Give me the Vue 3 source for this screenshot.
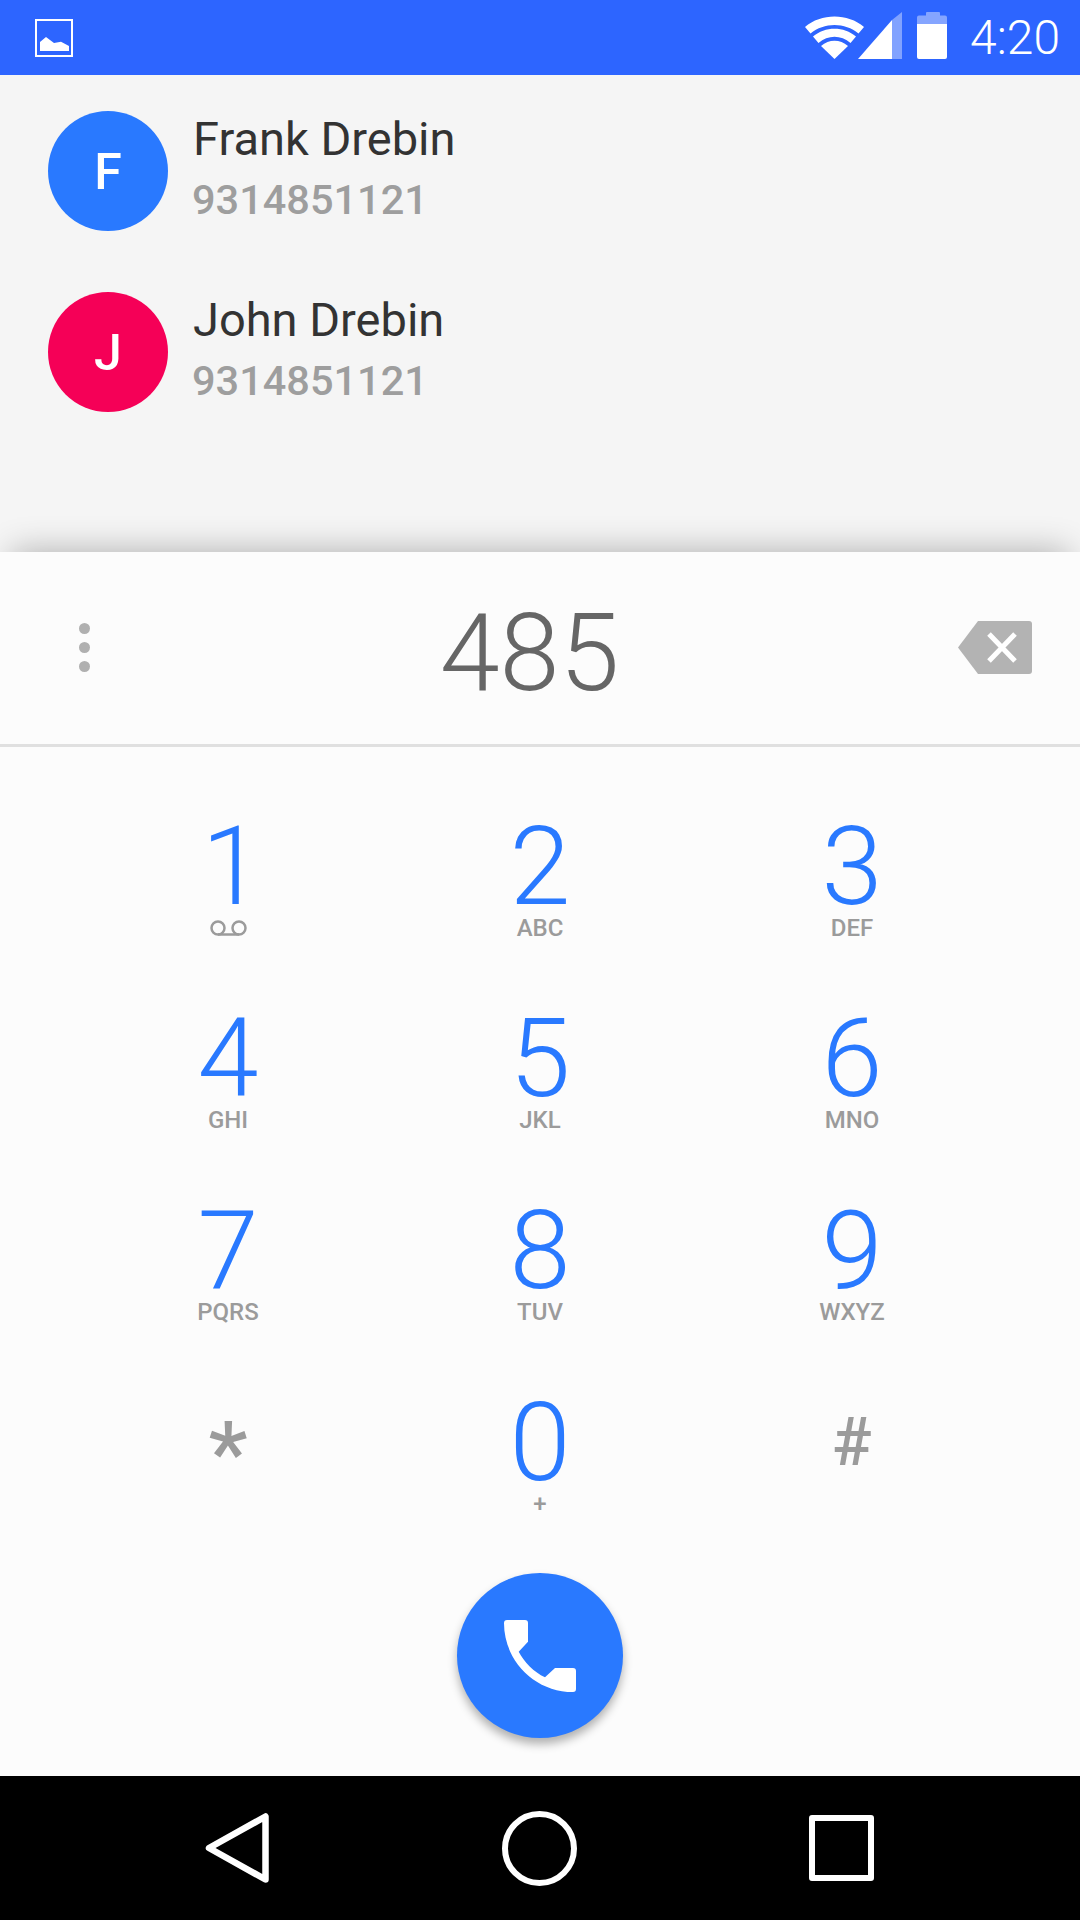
<script setup>
const contacts = [
  { initial: 'F', name: 'Frank Drebin', phone: '9314851121', tone: 'blue' },
  { initial: 'J', name: 'John Drebin', phone: '9314851121', tone: 'pink' }
]
const keys = [
  { d: '1', voicemail: true }, { d: '2', s: 'ABC' }, { d: '3', s: 'DEF' },
  { d: '4', s: 'GHI' }, { d: '5', s: 'JKL' }, { d: '6', s: 'MNO' },
  { d: '7', s: 'PQRS' }, { d: '8', s: 'TUV' }, { d: '9', s: 'WXYZ' },
  { d: '*', sym: 'star' }, { d: '0', s: '+' }, { d: '#', sym: 'hash' }
]
</script>

<template>
  <div class="phone">
    <header class="status">
      <svg class="pic" width="38" height="38" viewBox="0 0 38 38">
        <rect x="1" y="1" width="36" height="36" fill="none" stroke="#fff" stroke-width="2" />
        <path d="M5 23L11 18L15 21L19 24L26 22.700L34 27V32H5Z" fill="#fff" />
      </svg>
      <div class="status-right">
        <svg width="59" height="43" viewBox="0 0 59 43" class="wifi">
          <path d="M0 11C16-3 43-3 59 11L53.500 17.500C40 6 19 6 5.500 17.500Z" fill="#fff" />
          <path d="M8 20.500C20 10 39 10 51 20.500L45.500 27C36 18.500 23 18.500 13.500 27Z" fill="#fff" />
          <path d="M16 30C24 23 35 23 43 30L29.500 43Z" fill="#fff" />
        </svg>
        <svg width="44" height="47" viewBox="0 0 44 47" class="signal">
          <path d="M34 8L44 0V47H34Z" fill="#fff" fill-opacity=".4" />
          <path d="M0 47L34 8V47Z" fill="#fff" />
        </svg>
        <svg width="30" height="47" viewBox="0 0 30 47" class="battery">
          <path d="M2 3.500H9V1a1 1 0 0 1 1-1H22a1 1 0 0 1 1 1V3.500H28a2 2 0 0 1 2 2V12H0V5.500a2 2 0 0 1 2-2Z" fill="#fff" fill-opacity=".42" />
          <path d="M0 12H30V45a2 2 0 0 1-2 2H2a2 2 0 0 1-2-2Z" fill="#fff" />
        </svg>
        <span class="clock">4:20</span>
      </div>
    </header>

    <section class="contacts">
      <div v-for="c in contacts" :key="c.name" class="contact">
        <div class="avatar" :class="c.tone">{{ c.initial }}</div>
        <div class="info">
          <div class="name">{{ c.name }}</div>
          <div class="number">{{ c.phone }}</div>
        </div>
      </div>
    </section>

    <main class="pad">
      <div class="entry">
        <div class="dots"><i></i><i></i><i></i></div>
        <div class="typed">485</div>
        <svg class="backspace" width="74" height="53" viewBox="0 0 74 53">
          <path d="M20 0H71a3 3 0 0 1 3 3V50a3 3 0 0 1-3 3H20L0 26.500Z" fill="#b3b3b3" />
          <path d="M31 13L57 40M57 13L31 40" stroke="#fff" stroke-width="5" fill="none" />
        </svg>
      </div>

      <div class="keys">
        <div v-for="k in keys" :key="k.d" class="key">
          <span class="digit" :class="k.sym">{{ k.d }}</span>
          <svg v-if="k.voicemail" class="vm" width="37" height="16" viewBox="0 0 37 16">
            <circle cx="8" cy="8" r="6.500" fill="none" stroke="#9b9b9b" stroke-width="2.500" />
            <circle cx="29" cy="8" r="6.500" fill="none" stroke="#9b9b9b" stroke-width="2.500" />
            <path d="M8 14.500H29" stroke="#9b9b9b" stroke-width="2.500" />
          </svg>
          <span v-else-if="k.s" class="sub">{{ k.s }}</span>
        </div>
      </div>

      <div class="fab">
        <svg width="72" height="72" viewBox="0 0 72 72">
          <path d="M3 0H21a3 3 0 0 1 3 3V21.700L14.700 31.700C20 42 30 52 41 57.300L51 48H69a3 3 0 0 1 3 3V69a3 3 0 0 1-3 3C31 72 0 41 0 3a3 3 0 0 1 3-3Z" fill="#fff" />
        </svg>
      </div>
    </main>

    <nav class="nav">
      <svg width="64" height="72" viewBox="0 0 64 72">
        <path d="M60.500 4.500V67.500L4 36Z" fill="none" stroke="#fff" stroke-width="6.500" stroke-linejoin="round" />
      </svg>
      <svg width="75" height="75" viewBox="0 0 75 75">
        <circle cx="37.500" cy="37.500" r="34.500" fill="none" stroke="#fff" stroke-width="6" />
      </svg>
      <svg width="65" height="66" viewBox="0 0 65 66">
        <rect x="3" y="3" width="59" height="60" fill="none" stroke="#fff" stroke-width="6" stroke-linejoin="round" />
      </svg>
    </nav>
  </div>
</template>

<style>
html, body { margin: 0; padding: 0; background: #000; }
</style>

<style scoped>
.phone {
  width: 1080px;
  height: 1920px;
  display: flex;
  flex-direction: column;
  overflow: hidden;
  font-family: Roboto, "Liberation Sans", sans-serif;
}
.status {
  height: 75px;
  flex: none;
  background: #2d65ff;
  display: flex;
  align-items: flex-start;
  justify-content: space-between;
  padding: 0 20px 0 35px;
}
.pic { margin-top: 19px; }
.status-right { display: flex; align-items: flex-start; }
.wifi { margin-top: 16px; }
.signal { margin: 12px 0 0 -6px; }
.battery { margin: 12px 0 0 15px; }
.clock {
  margin-left: 23px;
  font-size: 48px;
  font-weight: 300;
  line-height: 75px;
  color: #fff;
}
.contacts {
  height: 477px;
  flex: none;
  box-sizing: border-box;
  padding: 36px 0 0 48px;
  background: #f5f5f5;
  display: flex;
  flex-direction: column;
  gap: 61px;
}
.contact { display: flex; align-items: flex-start; height: 120px; }
.avatar {
  width: 120px;
  height: 120px;
  border-radius: 50%;
  display: flex;
  align-items: center;
  justify-content: center;
  color: #fff;
  font-size: 50px;
  font-weight: 500;
  padding-top: 1px;
  box-sizing: border-box;
}
.blue { background: #2979ff; }
.pink { background: #f50057; }
.info { margin-left: 25px; }
.name {
  font-size: 47px;
  line-height: 52px;
  margin-top: 2px;
  color: #333;
}
.number {
  font-size: 41.500px;
  font-weight: 500;
  line-height: 52px;
  margin: 9px 0 0 -1px;
  color: #9e9e9e;
}
.pad {
  flex: 1;
  position: relative;
  background: #fcfcfc;
  box-shadow: 0 -12px 32px -12px rgba(0, 0, 0, .3);
  display: flex;
  flex-direction: column;
}
.entry {
  height: 192px;
  flex: none;
  border-bottom: 3px solid #e0e0e0;
  display: flex;
  align-items: center;
  justify-content: space-between;
  padding: 0 48px 0 79px;
}
.dots { display: flex; flex-direction: column; gap: 8px; margin-top: -2px; }
.dots i { display: block; width: 11px; height: 11px; border-radius: 50%; background: #b0b0b0; }
.typed {
  font-size: 108px;
  font-weight: 300;
  line-height: 110px;
  color: #666;
  margin: 10px 0 0 11px;
}
.backspace { margin-top: -2px; }
.keys {
  display: grid;
  grid-template-columns: repeat(3, 312px);
  grid-auto-rows: 192px;
  padding: 30px 0 0 72px;
}
.key { display: flex; flex-direction: column; align-items: center; }
.digit {
  font-size: 110px;
  font-weight: 300;
  line-height: 96px;
  margin-top: 42px;
  color: #2979ff;
}
.key:first-child .digit { margin-left: 8px; }
.digit.star, .digit.hash { color: #9b9b9b; font-weight: 500; }
.digit.star { font-size: 88px; margin-top: 52px; }
.digit.hash { font-size: 66px; }
.sub {
  font-size: 24px;
  font-weight: 500;
  line-height: 26px;
  color: #9b9b9b;
}
.vm { margin-top: 5px; }
.fab {
  width: 166px;
  height: 165px;
  flex: none;
  margin: 28px auto 0;
  border-radius: 50%;
  background: #2979ff;
  box-shadow: 0 6px 10px rgba(0, 0, 0, .3);
  display: flex;
  align-items: center;
  justify-content: center;
}
.nav {
  height: 144px;
  flex: none;
  background: #000;
  display: grid;
  grid-template-columns: repeat(3, 302px);
  justify-content: center;
  justify-items: center;
  align-items: center;
  padding-right: 2px;
}
</style>
